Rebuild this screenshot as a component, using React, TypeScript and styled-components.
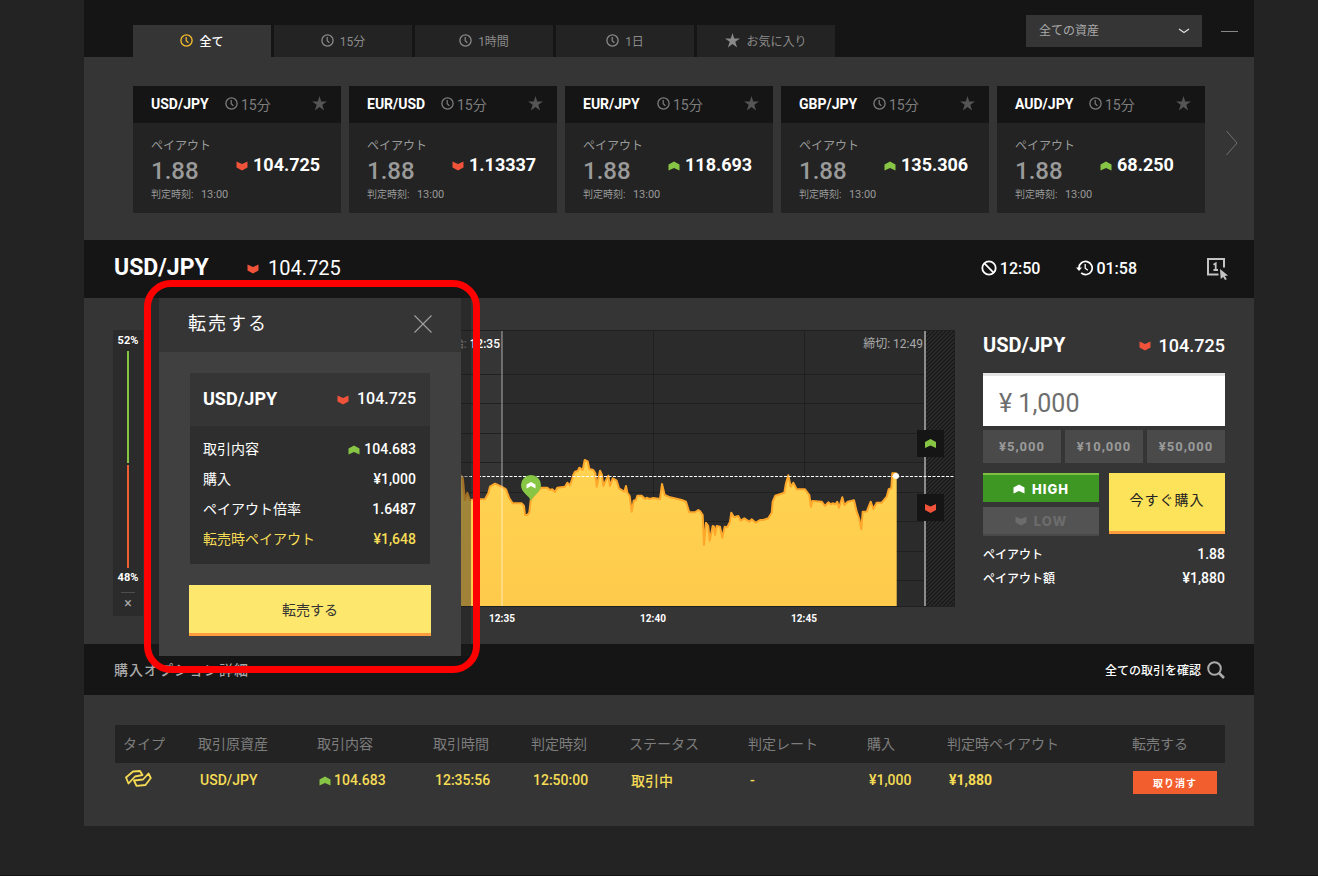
import React from "react";
import styled, { createGlobalStyle } from "styled-components";

const GlobalStyle = createGlobalStyle`
  *, *::before, *::after { box-sizing: border-box; }
  body {
    margin: 0;
    background: #232323;
    color: #fff;
    font-family: Roboto, "Noto Sans CJK JP", sans-serif;
    font-size: 14px;
  }
  button, input, select { font-family: inherit; border: 0; border-radius: 0; }
  button { cursor: pointer; padding: 0; }
  h1, h2, h3, p { margin: 0; font-weight: 500; }
`;

const UP = "#87c545";
const DOWN = "#f0523a";

/* ---------- icons ---------- */

const Icon = styled.svg`
  display: block;
  flex: none;
`;

const Chevron = ({ up, color }: { up?: boolean; color?: string }) => (
  <Icon width="12" height="10" viewBox="0 0 12 10" fill={color ?? (up ? UP : DOWN)}>
    <path d={up ? "M.5 3.500 6 .5l5.500 3V9.500L6 7 .5 9.500Z" : "M.5.5 6 3l5.500-2.500V6.500L6 9.500.5 6.500Z"} />
  </Icon>
);

const Clock = ({ color = "currentColor" }: { color?: string }) => (
  <Icon width="13" height="13" viewBox="0 0 13 13" fill="none" stroke={color}>
    <circle cx="6.5" cy="6.5" r="5.6" strokeWidth="1.3" />
    <path d="M6.2 3v3.8l2.2 2" strokeWidth="1.2" />
  </Icon>
);

const Star = () => (
  <Icon width="15" height="15" viewBox="0 0 15 15" fill="currentColor">
    <path d="M7.5 0 9.2 5.5H15L10.3 8.8 12.1 14.5 7.5 11 2.9 14.5 4.7 8.8 0 5.5H5.8Z" />
  </Icon>
);

/* ---------- shell ---------- */

const Page = styled.div`
  padding: 0 64px 49px 84px;
  border-bottom: 1px solid #131313;
`;

const TopBar = styled.header`
  display: flex;
  align-items: flex-end;
  height: 57px;
  padding: 0 16px 0 49px;
  background: #151515;
`;

const Tabs = styled.nav`
  display: flex;
  gap: 3px;
`;

const Tab = styled.button<{ $active?: boolean }>`
  display: flex;
  align-items: center;
  justify-content: center;
  gap: 6px;
  width: 138px;
  height: 32px;
  padding-bottom: 1px;
  font-size: 12px;
  font-weight: ${(p) => (p.$active ? 500 : 400)};
  background: ${(p) => (p.$active ? "#353535" : "#232323")};
  color: ${(p) => (p.$active ? "#fff" : "#8a8a8a")};
`;

const AssetFilter = styled.label`
  display: flex;
  align-items: center;
  margin: 0 0 10px auto;
  width: 176px;
  padding-right: 12px;
  background: #353535;
`;

const AssetSelect = styled.select`
  flex: 1;
  height: 32px;
  padding: 0 13px;
  appearance: none;
  background: transparent;
  color: #aaa;
  font-size: 12px;
`;

const Minimize = styled.button`
  width: 17px;
  height: 32px;
  margin: 0 0 10px 19px;
  background: none;
`;

/* ---------- asset cards ---------- */

const Assets = styled.section`
  display: flex;
  padding: 29px 0 27px 49px;
  background: #353535;
`;

const CardGrid = styled.div`
  flex: 1;
  display: grid;
  grid-template-columns: repeat(5, 1fr);
  gap: 8px;
`;

const Card = styled.article`
  height: 127px;
  background: #232323;
`;

const CardHead = styled.div`
  display: flex;
  align-items: center;
  height: 37px;
  padding: 0 14px 2px 18px;
  background: #151515;
`;

const CardPair = styled.h2`
  width: 74px;
  font-size: 14px;
  font-weight: 700;
`;

const CardTerm = styled.span`
  display: flex;
  align-items: center;
  gap: 3px;
  margin-right: auto;
  color: #7d7d7d;
`;

const StarButton = styled.button`
  background: none;
  color: #555;
`;

const CardBody = styled.div`
  display: grid;
  grid-template-columns: 85px 1fr;
  padding: 13px 0 0 18px;
  color: #9a9a9a;
`;

const CardPayout = styled.p`
  font-size: 12px;
  line-height: 20px;
  font-weight: 400;
  white-space: nowrap;
`;

const CardRatio = styled.p`
  font-size: 24px;
  line-height: 30px;
`;

const CardJudge = styled.p`
  font-size: 11px;
  line-height: 18px;
  font-weight: 400;
  white-space: nowrap;
  span { margin-right: 5px; font-size: 10px; }
`;

const CardPrice = styled.div`
  display: flex;
  align-items: center;
  gap: 5px;
  height: 56px;
  color: #fff;
  font-size: 18px;
  font-weight: 700;
  ${Icon} { margin-top: 4px; }
`;

const NextButton = styled.button`
  display: flex;
  align-items: center;
  justify-content: flex-end;
  width: 49px;
  height: 114px;
  padding-right: 16px;
  background: none;
`;

/* ---------- instrument bar ---------- */

const InstrumentBar = styled.section`
  display: flex;
  align-items: center;
  height: 58px;
  padding: 0 25px 2px 30px;
  background: #151515;
`;

const InstrumentName = styled.h1`
  width: 133px;
  font-size: 23px;
  font-weight: 700;
  line-height: 28px;
`;

const Quote = styled.span<{ $size?: number; $gap?: number; $light?: boolean }>`
  display: flex;
  align-items: center;
  gap: ${(p) => p.$gap ?? 8}px;
  font-size: ${(p) => p.$size ?? 18}px;
  font-weight: ${(p) => (p.$light ? 400 : 500)};
  ${Icon} { margin-top: 2px; }
`;

const Timers = styled.div`
  display: flex;
  align-items: center;
  gap: 36px;
  margin-left: auto;
  margin-right: 69px;
`;

const Timer = styled.span`
  display: flex;
  align-items: center;
  gap: 3px;
  font-size: 16px;
  font-weight: 500;
`;

const IconButton = styled.button`
  background: none;
`;

/* ---------- trading area ---------- */

const Trading = styled.section`
  position: relative;
  display: flex;
  align-items: flex-start;
  padding: 32px 29px 14px;
  background: #353535;
`;

const Gauge = styled.aside`
  display: flex;
  flex-direction: column;
  align-items: center;
  width: 30px;
  height: 286px;
  padding-top: 1px;
  background: #2b2b2b;
  font-size: 11px;
  line-height: 20px;
  font-weight: 700;
`;

const GaugeBar = styled.div<{ $color: string; $share: number }>`
  flex: ${(p) => p.$share};
  width: 2px;
  background: ${(p) => p.$color};
  & + & { margin-top: 2px; }
`;

const GaugeClose = styled.button`
  width: 14px;
  height: 24px;
  margin-top: 4px;
  padding-bottom: 4px;
  border-top: 1px solid #4d4d4d;
  background: none;
  color: #aaa;
  font-size: 14px;
`;

const ChartBox = styled.div`
  flex: 1;
  margin: 0 28px 0 20px;
`;

const ChartSvg = styled.svg`
  display: block;
  width: 100%;
  height: auto;
  font-family: Roboto, "Noto Sans CJK JP", sans-serif;
`;

/* Price series, in thirds of a chart unit */
const seriesStart: number[][] = [
  [0, 490], [30, 470], [58, 462], [63, 468], [68, 472], [75, 540], [82, 518], [90, 540], [120, 538], [135, 538], [145, 520], [150, 500],
  [165, 491], [178, 497], [190, 503], [198, 508], [208, 535], [218, 550], [245, 550], [252, 558], [255, 585], [262, 585],
  [268, 578], [272, 540], [290, 515], [303, 503], [322, 503], [330, 510], [337, 508], [345, 516], [352, 503],
  [375, 500], [382, 488], [390, 496], [395, 482], [400, 465], [405, 455], [413, 453], [418, 443], [428, 450], [434, 420], [443, 424], [448, 447],
  [460, 450], [466, 460], [470, 500], [480, 452], [486, 465], [490, 498], [497, 482], [505, 467], [510, 498],
  [518, 475], [530, 482], [537, 505], [545, 510], [553, 515], [558, 498], [562, 518], [569, 528], [575, 575], [581, 542], [588, 540], [592, 527],
  [605, 527], [615, 537], [620, 533], [628, 537], [640, 534], [660, 537], [666, 492], [674, 525], [690, 532], [725, 540], [738, 545],
  [748, 577], [765, 577], [775, 570],
];
const seriesEnd: number[][] = [
  [0, 573], [8, 585], [12, 675], [18, 608], [25, 618], [29, 662], [38, 618], [42, 620], [45, 645], [50, 618], [60, 620],
  [67, 653], [74, 620], [82, 622], [90, 605], [94, 578], [102, 592], [115, 588], [122, 602], [133, 595], [148, 605],
  [155, 598], [167, 608], [180, 600], [190, 600], [205, 595], [215, 578], [218, 545], [226, 527], [253, 518], [258, 490],
  [265, 466], [272, 500], [280, 488], [290, 508], [315, 508], [328, 525], [333, 560], [337, 543], [365, 545],
  [375, 558], [385, 547], [392, 553], [400, 550], [406, 553], [412, 545], [417, 563], [427, 532], [433, 555], [443, 545], [462, 541], [470, 575],
  [478, 597], [484, 628], [488, 575], [500, 575], [512, 545], [520, 567], [530, 548], [545, 548], [560, 530],
  [566, 508], [574, 505], [577, 460], [590, 460],
];
const linePoints = [
  ...seriesStart.map(([x, y]) => [x + 831, y - 30]),
  ...seriesEnd.map(([x, y]) => [x + 1611, y - 30]),
]
  .map(([x, y]) => `${(x / 3).toFixed(1)},${(y / 3).toFixed(1)}`)
  .join(" ");

const gridRows = [44, 73, 103, 132, 162, 191, 221, 250];

const Chart = () => (
  <ChartSvg viewBox="0 0 792 300" role="img" aria-label="USD/JPY">
    <defs>
      <linearGradient id="area" x1="0" y1="0" x2="0" y2="1">
        <stop offset="0" stopColor="#ffd452" />
        <stop offset="1" stopColor="#ffca4b" />
      </linearGradient>
      <pattern id="hatch" width="4" height="4" patternUnits="userSpaceOnUse">
        <rect width="4" height="4" fill="#2b2b2b" />
        <path d="M-1 1 1-1M0 4 4 0M3 5 5 3" stroke="#151515" strokeWidth="1.2" />
      </pattern>
    </defs>
    <rect x="339" width="423" height="276" fill="#2b2b2b" />
    <rect x="762" width="30" height="276" fill="url(#hatch)" />
    <g fill="#202020">
      {gridRows.map((y) => (
        <rect key={y} y={y} width="762" height="1" />
      ))}
      <rect x="490" width="1" height="276" />
      <rect x="641" width="1" height="276" />
      <rect width="792" height="1" />
      <rect y="276" width="792" height="1" />
      <rect x="791" width="1" height="276" />
    </g>
    <polygon points={`277,276 ${linePoints} 733.7,276`} fill="url(#area)" />
    <polyline points={linePoints} fill="none" stroke="#ffa72b" strokeWidth="2" strokeLinejoin="round" />
    <rect x="338" y="1" width="2" height="275" fill="#fff" fillOpacity="0.3" />
    <rect x="761" y="1" width="2" height="275" fill="#8c8c8c" />
    <path d="M0 146.500H792" stroke="#fff" strokeDasharray="3 1.500" />
    <circle cx="733" cy="146" r="3" fill="#fff" />
    <path d="M368 171c-2-6-10-8-10-16a10 10 0 0 1 20 0c0 8-8 10-10 16Z" fill={UP} />
    <path d="M363.500 154.500 368 152l4.500 2.500v4L368 156l-4.500 2.500Z" fill="#fff" />
    <rect x="754" y="100" width="27" height="27" fill="#151515" />
    <path d="M762 112 767.500 109l5.500 3v6l-5.500-2.500L762 118Z" fill={UP} />
    <rect x="754" y="164" width="27" height="27" fill="#151515" />
    <path d="M762 174l5.500 2.500L773 174v6l-5.500 3L762 180Z" fill={DOWN} />
    <text x="337" y="18" textAnchor="end" fontSize="12" fill="#aaa">
      開始: <tspan fill="#fff" fontWeight="500">12:35</tspan>
    </text>
    <text x="760" y="18" textAnchor="end" fontSize="12" fill="#aaa">締切: 12:49</text>
    <g fontSize="10" fontWeight="700" fill="#fff" textAnchor="middle">
      <text x="339" y="292">12:35</text>
      <text x="490" y="292">12:40</text>
      <text x="641" y="292">12:45</text>
    </g>
  </ChartSvg>
);

const Order = styled.form`
  width: 242px;
`;

const SpreadRow = styled.div`
  display: flex;
  align-items: center;
  justify-content: space-between;
`;

const OrderHead = styled(SpreadRow)`
  height: 30px;
  margin-bottom: 13px;
`;

const OrderPair = styled.h2`
  font-size: 20px;
  font-weight: 700;
`;

const AmountInput = styled.input`
  display: block;
  width: 100%;
  height: 53px;
  padding: 4px 16px 0;
  border-top: 3px solid #e4e4e4;
  background: #fff;
  color: #6e6e6e;
  font-size: 25px;
`;

const Presets = styled.div`
  display: grid;
  grid-template-columns: repeat(3, 1fr);
  gap: 4px;
  margin: 4px 0 10px;
`;

const Preset = styled.button`
  height: 33px;
  background: #4a4a4a;
  color: #9a9a9a;
  font-size: 13px;
  font-weight: 700;
  letter-spacing: 1px;
`;

const Actions = styled.div`
  display: grid;
  grid-template-columns: 1fr 1fr;
  gap: 10px;
  margin-bottom: 6px;
`;

const Directions = styled.div`
  display: grid;
  gap: 5px;
`;

const Direction = styled.button<{ $high?: boolean }>`
  display: flex;
  align-items: center;
  justify-content: center;
  gap: 7px;
  height: 29px;
  border-top: ${(p) => (p.$high ? "2px solid #7cc142" : "0")};
  border-bottom: ${(p) => (p.$high ? "0" : "2px solid #484848")};
  background: ${(p) => (p.$high ? "#3e9623" : "#535353")};
  color: ${(p) => (p.$high ? "#fff" : "#6c6c6c")};
  font-family: Inter, sans-serif;
  font-size: 13px;
  font-weight: 800;
  letter-spacing: 1px;
`;

const BuyButton = styled.button`
  height: 61px;
  padding-bottom: 6px;
  border-bottom: 3px solid #ff9c3d;
  background: #fde35a;
  color: #222;
  font-size: 14px;
  letter-spacing: 1px;
`;

const OrderInfo = styled(SpreadRow)`
  height: 24px;
  font-weight: 500;
  span:first-child { padding-bottom: 2px; font-size: 12px; }
`;

/* ---------- resale dialog ---------- */

const Dialog = styled.div`
  position: absolute;
  top: 0;
  left: 75px;
  width: 302px;
  background: #404040;
  box-shadow: 10px 0 0 rgba(28, 28, 28, 0.42), -8px 0 0 rgba(28, 28, 28, 0.5);
`;

const Highlight = styled.div`
  position: absolute;
  inset: -18px -19px -17px -15px;
  border: 7px solid #f00;
  border-radius: 27px;
  pointer-events: none;
`;

const DialogHead = styled(SpreadRow)`
  height: 54px;
  padding: 0 29px 2px;
  background: #353535;
`;

const DialogTitle = styled.h2`
  padding-bottom: 4px;
  font-size: 18px;
  font-weight: 400;
  letter-spacing: 2px;
`;

const DialogBody = styled.div`
  padding: 21px 30px 20px;
`;

const Summary = styled.div`
  margin: 0 1px 21px;
  padding-bottom: 10px;
  background: #2e2e2e;
`;

const SummaryHead = styled(SpreadRow)`
  height: 53px;
  margin-bottom: 8px;
  padding: 0 14px 2px 13px;
  background: #353535;
`;

const SummaryPair = styled.h3`
  font-size: 18px;
  font-weight: 700;
`;

const SummaryRow = styled(SpreadRow)<{ $accent?: boolean }>`
  height: 30px;
  padding: 0 14px 0 13px;
  color: ${(p) => (p.$accent ? "#f6dc55" : "#fff")};
  font-weight: 500;
  span:first-child { padding-bottom: 2px; font-weight: 400; }
`;

const ResaleButton = styled.button`
  width: 100%;
  height: 51px;
  border-bottom: 3px solid #ff9c3d;
  background: #fde76c;
  color: #333;
  font-size: 14px;
`;

/* ---------- purchases ---------- */

const ListBar = styled.section`
  display: flex;
  align-items: center;
  justify-content: space-between;
  height: 51px;
  padding: 0 29px 0 30px;
  background: #151515;
`;

const ListTitle = styled.h2`
  padding-bottom: 2px;
  color: #aaa;
  font-size: 14px;
  letter-spacing: 1px;
`;

const AllTrades = styled.a`
  display: flex;
  align-items: center;
  gap: 6px;
  color: #fff;
  font-size: 12px;
  font-weight: 500;
  text-decoration: none;
`;

const ListPanel = styled.section`
  padding: 30px 29px 29px 31px;
  background: #353535;
`;

const Table = styled.table`
  width: 100%;
  table-layout: fixed;
  border-collapse: collapse;
  color: #f6dc55;
  text-align: left;
  white-space: nowrap;
`;

const Th = styled.th`
  height: 38px;
  padding: 0 0 2px 8px;
  background: #232323;
  color: #7d7d7d;
  font-weight: 400;
`;

const Td = styled.td<{ $strong?: boolean }>`
  height: 34px;
  padding: 0 0 0 10px;
  font-weight: ${(p) => (p.$strong ? 700 : 500)};
`;

const CancelButton = styled.button`
  display: block;
  width: 84px;
  height: 23px;
  margin: 5px 0 0 -1px;
  padding-bottom: 1px;
  background: #f35e2f;
  color: #fff;
  font-size: 10px;
  font-weight: 700;
  letter-spacing: 1px;
`;

const columns: [string, number][] = [
  ["タイプ", 75],
  ["取引原資産", 119],
  ["取引内容", 116],
  ["取引時間", 98],
  ["判定時刻", 98],
  ["ステータス", 119],
  ["判定レート", 119],
  ["購入", 80],
  ["判定時ペイアウト", 185],
  ["転売する", 101],
];

const cards = [
  { pair: "USD/JPY", price: "104.725", up: false },
  { pair: "EUR/USD", price: "1.13337", up: false },
  { pair: "EUR/JPY", price: "118.693", up: true },
  { pair: "GBP/JPY", price: "135.306", up: true },
  { pair: "AUD/JPY", price: "68.250", up: true },
];

export default function App() {
  return (
    <>
      <GlobalStyle />
      <Page>
        <TopBar>
          <Tabs>
            <Tab $active><Clock color="#fbc02d" />全て</Tab>
            <Tab><Clock />15分</Tab>
            <Tab><Clock />1時間</Tab>
            <Tab><Clock />1日</Tab>
            <Tab><Star />お気に入り</Tab>
          </Tabs>
          <AssetFilter>
            <AssetSelect aria-label="資産"><option>全ての資産</option></AssetSelect>
            <Icon width="12" height="8" viewBox="0 0 12 8" fill="none" stroke="#ddd" strokeWidth="1.3">
              <path d="M1 2 6 5.500 11 2" />
            </Icon>
          </AssetFilter>
          <Minimize aria-label="最小化">
            <Icon width="17" height="2" viewBox="0 0 17 2"><path d="M0 1.500H17" stroke="#888" /></Icon>
          </Minimize>
        </TopBar>

        <Assets>
          <CardGrid>
            {cards.map((c) => (
              <Card key={c.pair}>
                <CardHead>
                  <CardPair>{c.pair}</CardPair>
                  <CardTerm><Clock />15分</CardTerm>
                  <StarButton aria-label="お気に入り"><Star /></StarButton>
                </CardHead>
                <CardBody>
                  <div>
                    <CardPayout>ペイアウト</CardPayout>
                    <CardRatio>1.88</CardRatio>
                    <CardJudge><span>判定時刻: </span>13:00</CardJudge>
                  </div>
                  <CardPrice><Chevron up={c.up} />{c.price}</CardPrice>
                </CardBody>
              </Card>
            ))}
          </CardGrid>
          <NextButton aria-label="次へ">
            <Icon width="12" height="26" viewBox="0 0 12 26" fill="none" stroke="#707070">
              <path d="M.5 1 11 13 .5 25" />
            </Icon>
          </NextButton>
        </Assets>

        <InstrumentBar>
          <InstrumentName>USD/JPY</InstrumentName>
          <Quote $size={20} $gap={9} $light><Chevron />104.725</Quote>
          <Timers>
            <Timer>
              <Icon width="16" height="16" viewBox="0 0 16 16" fill="none" stroke="#fff" strokeWidth="1.8">
                <circle cx="8" cy="8" r="6.7" /><path d="M3.200 3.200 12.800 12.800" />
              </Icon>
              12:50
            </Timer>
            <Timer>
              <Icon width="17" height="16" viewBox="0 0 17 16" fill="none" stroke="#fff" strokeWidth="1.7">
                <path d="M3 8A6.600 6.600 0 1 1 5.200 12.900" /><path d="M9.200 4v4.300l2.600 2" strokeWidth="1.3" />
                <path d="M0 7.500H6L3 11Z" fill="#fff" stroke="none" />
              </Icon>
              01:58
            </Timer>
          </Timers>
          <IconButton aria-label="ワンクリック注文">
            <Icon width="23" height="24" viewBox="0 0 23 24" fill="none">
              <path d="M18 11.500V3H2v15.500h10.500" stroke="#c4c4c4" strokeWidth="2" />
              <path d="M7.500 8.700 9.700 7.300V14M7.500 14h4.500" stroke="#c4c4c4" strokeWidth="1.8" />
              <path d="M14 13 22 19.500 18.800 20 20.800 23.300 19 24 17.200 21 14.700 23Z" fill="#c4c4c4" />
            </Icon>
          </IconButton>
        </InstrumentBar>

        <Trading>
          <Gauge>
            52%
            <GaugeBar $color={UP} $share={52} />
            <GaugeBar $color="#ee6033" $share={48} />
            48%
            <GaugeClose aria-label="閉じる">×</GaugeClose>
          </Gauge>
          <ChartBox><Chart /></ChartBox>
          <Order onSubmit={(e) => e.preventDefault()}>
            <OrderHead>
              <OrderPair>USD/JPY</OrderPair>
              <Quote><Chevron />104.725</Quote>
            </OrderHead>
            <AmountInput aria-label="購入金額" defaultValue="¥ 1,000" />
            <Presets>
              <Preset type="button">¥5,000</Preset>
              <Preset type="button">¥10,000</Preset>
              <Preset type="button">¥50,000</Preset>
            </Presets>
            <Actions>
              <Directions>
                <Direction type="button" $high><Chevron up color="#fff" />HIGH</Direction>
                <Direction type="button"><Chevron color="#6c6c6c" />LOW</Direction>
              </Directions>
              <BuyButton>今すぐ購入</BuyButton>
            </Actions>
            <OrderInfo><span>ペイアウト</span><span>1.88</span></OrderInfo>
            <OrderInfo><span>ペイアウト額</span><span>¥1,880</span></OrderInfo>
          </Order>

          <Dialog role="dialog" aria-label="転売する">
            <DialogHead>
              <DialogTitle>転売する</DialogTitle>
              <IconButton aria-label="閉じる">
                <Icon width="18" height="18" viewBox="0 0 18 18" stroke="#a0a0a0" strokeWidth="1.1">
                  <path d="M.5.5l17 17M17.500.5l-17 17" />
                </Icon>
              </IconButton>
            </DialogHead>
            <DialogBody>
              <Summary>
                <SummaryHead>
                  <SummaryPair>USD/JPY</SummaryPair>
                  <Quote $size={16}><Chevron />104.725</Quote>
                </SummaryHead>
                <SummaryRow><span>取引内容</span><Quote $size={14} $gap={4}><Chevron up />104.683</Quote></SummaryRow>
                <SummaryRow><span>購入</span><span>¥1,000</span></SummaryRow>
                <SummaryRow><span>ペイアウト倍率</span><span>1.6487</span></SummaryRow>
                <SummaryRow $accent><span>転売時ペイアウト</span><span>¥1,648</span></SummaryRow>
              </Summary>
              <ResaleButton>転売する</ResaleButton>
            </DialogBody>
            <Highlight />
          </Dialog>
        </Trading>

        <ListBar>
          <ListTitle>購入オプション詳細</ListTitle>
          <AllTrades href="#all">
            全ての取引を確認
            <Icon width="18" height="18" viewBox="0 0 18 18" fill="none" stroke="#aaa">
              <circle cx="7.500" cy="7.500" r="6.300" strokeWidth="2" />
              <path d="M12 12l5 5" strokeWidth="2.600" />
            </Icon>
          </AllTrades>
        </ListBar>

        <ListPanel>
          <Table>
            <colgroup>
              {columns.map(([name, w]) => (
                <col key={name} style={{ width: `${(w / 1110) * 100}%` }} />
              ))}
            </colgroup>
            <thead>
              <tr>{columns.map(([name]) => <Th key={name}>{name}</Th>)}</tr>
            </thead>
            <tbody>
              <tr>
                <Td>
                  <Icon width="27" height="20" viewBox="0 0 27 20" fill="none" stroke="#f6dc55" strokeWidth="1.8" strokeLinejoin="round">
                    <path d="M3.500 13.500 1 7.500 8 1.500 15 1 17.500 5 10 6.500Z" />
                    <path d="M9 10.500 11.500 15.800 20.500 15 25.800 8 23.500 3.500 18 9.500Z" />
                  </Icon>
                </Td>
                <Td>USD/JPY</Td>
                <Td><Quote $size={14} $gap={3}><Chevron up />104.683</Quote></Td>
                <Td>12:35:56</Td>
                <Td>12:50:00</Td>
                <Td>取引中</Td>
                <Td>-</Td>
                <Td>¥1,000</Td>
                <Td $strong>¥1,880</Td>
                <Td><CancelButton>取り消す</CancelButton></Td>
              </tr>
            </tbody>
          </Table>
        </ListPanel>
      </Page>
    </>
  );
}
